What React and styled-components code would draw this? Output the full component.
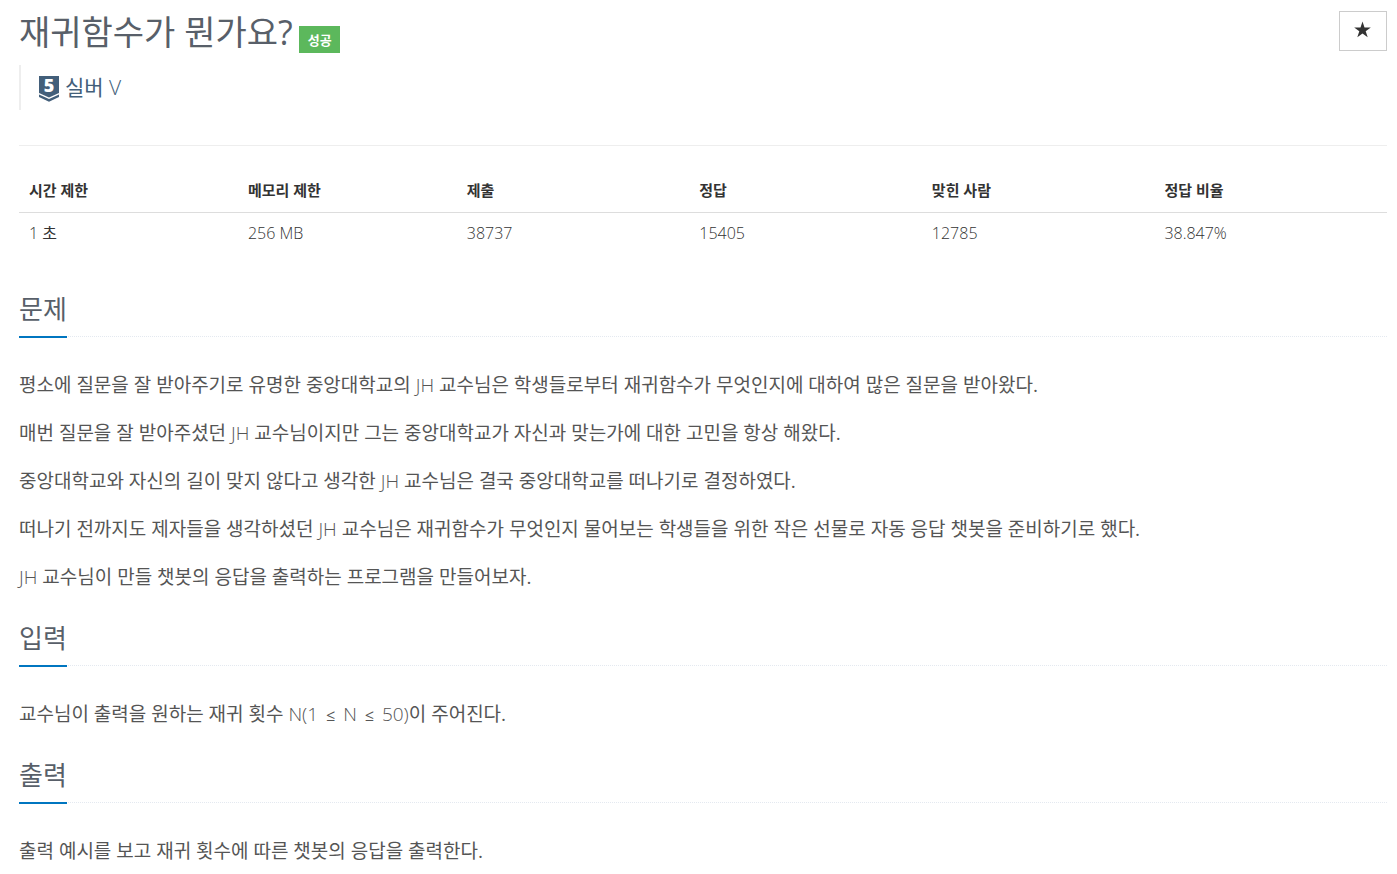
import React from 'react'
import styled, { createGlobalStyle } from 'styled-components'

const GlobalStyle = createGlobalStyle`
  * {
    box-sizing: border-box;
  }

  body {
    margin: 0;
    background: #fff;
    color: #333;
    font-family: "Open Sans", "Noto Sans CJK KR", sans-serif;
    font-size: 16px;
    font-weight: 400;
    line-height: 24px;
  }
`

const Page = styled.main`
  padding: 11px 10px 0 19px;
`

const Header = styled.header`
  display: flex;
  justify-content: space-between;
  align-items: flex-start;
  padding-bottom: 35px;
  border-bottom: 1px solid #eee;
`

const TitleRow = styled.div`
  display: flex;
  align-items: flex-end;
  gap: 6px;
  height: 42px;
`

const Title = styled.h1`
  margin: 0;
  color: #585f69;
  font-size: 34px;
  font-weight: 400;
  line-height: 42px;
`

const Label = styled.span`
  padding: 1px 8px 0 9px;
  background: #5cb85c;
  color: #fff;
  font-size: 13px;
  font-weight: 700;
  line-height: 26px;
`

const Tier = styled.blockquote`
  display: flex;
  align-items: center;
  gap: 5px;
  height: 45px;
  margin: 12px 0 0;
  padding: 0 0 2px 17px;
  border-left: 2px solid #eee;
  color: #435f7a;
  font-size: 21px;
  line-height: 32px;
`

const StarButton = styled.button`
  width: 48px;
  height: 40px;
  padding: 0;
  border: 1px solid #ccc;
  background: #fff;
  color: #333;
  cursor: pointer;
`

const Info = styled.table`
  width: 100%;
  margin: 24px 0 36px;
  border-collapse: collapse;
  table-layout: fixed;

  th,
  td {
    padding: 8px 10px;
    text-align: left;
  }

  th {
    width: 17%;
    padding-bottom: 10px;
    border-bottom: 1px solid #ddd;
    font-size: 15px;
    font-weight: 700;
  }

  th:nth-child(-n + 2) {
    width: 16%;
  }
`

const Headline = styled.div`
  display: flex;
  margin-bottom: 30px;
  border-bottom: 1px dotted #e4e9f0;

  h2 {
    margin: 0 0 -2px;
    padding-bottom: 7px;
    border-bottom: 2px solid #0076c0;
    color: #585f69;
    font-size: 26px;
    font-weight: 400;
    line-height: 40px;
  }
`

const Section = styled.section`
  margin-bottom: 23px;

  p {
    margin: 0 0 12px;
    color: #555;
    font-size: 19px;
    line-height: 36px;
  }
`

const Latin = styled.span`
  font-weight: 300;
`

const Operator = styled.span`
  margin: 0 3px;
  font-size: 16px;
  line-height: 16px;
`

const stats = [
  ['시간 제한', '1 초'],
  ['메모리 제한', '256 MB'],
  ['제출', '38737'],
  ['정답', '15405'],
  ['맞힌 사람', '12785'],
  ['정답 비율', '38.847%'],
]

const sections = [
  {
    title: '문제',
    text: [
      '평소에 질문을 잘 받아주기로 유명한 중앙대학교의 JH 교수님은 학생들로부터 재귀함수가 무엇인지에 대하여 많은 질문을 받아왔다.',
      '매번 질문을 잘 받아주셨던 JH 교수님이지만 그는 중앙대학교가 자신과 맞는가에 대한 고민을 항상 해왔다.',
      '중앙대학교와 자신의 길이 맞지 않다고 생각한 JH 교수님은 결국 중앙대학교를 떠나기로 결정하였다.',
      '떠나기 전까지도 제자들을 생각하셨던 JH 교수님은 재귀함수가 무엇인지 물어보는 학생들을 위한 작은 선물로 자동 응답 챗봇을 준비하기로 했다.',
      'JH 교수님이 만들 챗봇의 응답을 출력하는 프로그램을 만들어보자.',
    ],
  },
  {
    title: '입력',
    text: ['교수님이 출력을 원하는 재귀 횟수 N(1 ≤ N ≤ 50)이 주어진다.'],
  },
  {
    title: '출력',
    text: ['출력 예시를 보고 재귀 횟수에 따른 챗봇의 응답을 출력한다.'],
  },
]

// Latin letters and digits are light, Hangul stays regular
function Mixed({ children }) {
  return children.split(/([A-Z0-9()]+(?:\.[0-9]+)?%?|≤)/).map((part, i) => {
    if (i % 2 === 0) return part
    return part === '≤' ? <Operator key={i}>{part}</Operator> : <Latin key={i}>{part}</Latin>
  })
}

const TierText = styled.text`
  fill: #fff;
  font-family: "Open Sans", sans-serif;
  font-size: 18px;
  font-weight: 800;
  text-anchor: middle;
`

function TierBadge() {
  return (
    <svg width="22" height="36" viewBox="0 -5 22 36" aria-hidden="true">
      <path d="M1 2h20v17l-10 4.5-10-4.5z" fill="#435f7a" />
      <path d="M1 20.5l10 4.5 10-4.5v2.5l-10 4.7-10-4.7z" fill="#435f7a" />
      <TierText x="11" y="18">5</TierText>
    </svg>
  )
}

function Star() {
  return (
    <svg width="18" height="18" viewBox="0 0 18 18" aria-hidden="true">
      <path d="M8.5 0.5l2 6h6.3l-5.1 3.7 2 6.1-5.2-3.8-5.2 3.8 2-6.1L.2 6.5h6.3z" fill="#333" />
    </svg>
  )
}

export default function App() {
  return (
    <>
      <GlobalStyle />
      <Page>
        <Header>
          <div>
            <TitleRow>
              <Title>재귀함수가 뭔가요?</Title>
              <Label>성공</Label>
            </TitleRow>
            <Tier>
              <TierBadge />
              <span><Mixed>실버 V</Mixed></span>
            </Tier>
          </div>
          <StarButton type="button" aria-label="즐겨찾기">
            <Star />
          </StarButton>
        </Header>
        <Info>
          <thead>
            <tr>
              {stats.map(([name]) => (
                <th key={name} scope="col">{name}</th>
              ))}
            </tr>
          </thead>
          <tbody>
            <tr>
              {stats.map(([name, value]) => (
                <td key={name}><Mixed>{value}</Mixed></td>
              ))}
            </tr>
          </tbody>
        </Info>
        {sections.map(({ title, text }) => (
          <Section key={title}>
            <Headline>
              <h2>{title}</h2>
            </Headline>
            {text.map((line) => (
              <p key={line}><Mixed>{line}</Mixed></p>
            ))}
          </Section>
        ))}
      </Page>
    </>
  )
}
